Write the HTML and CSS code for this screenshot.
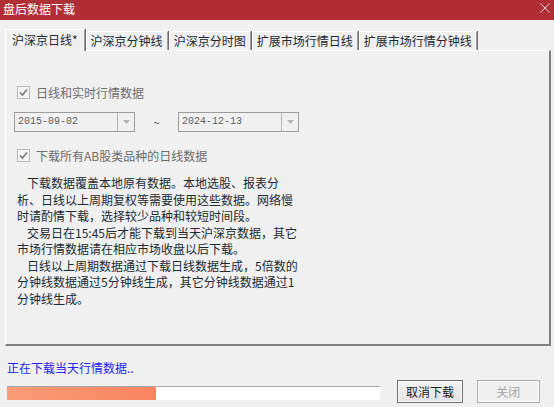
FILE: index.html
```html
<!DOCTYPE html>
<html lang="zh-CN">
<head>
    <meta charset="UTF-8">
    <title>盘后数据下载</title>
    <link rel="stylesheet" href="styles.css">
</head>
<body>
    <div class="window">
        <!-- Title bar -->
        <div class="titlebar">
            <span class="title">盘后数据下载</span>
            <svg class="close" width="10" height="10" viewBox="0 0 10 10">
                <path d="M0.5 0.5 L9.5 9.5 M9.5 0.5 L0.5 9.5" stroke="#f4d6d8" stroke-width="1" fill="none"/>
            </svg>
        </div>

        <!-- Tabs -->
        <div class="tabs">
            <div class="tab active">沪深京日线*</div>
            <div class="tab">沪深京分钟线</div>
            <div class="tab">沪深京分时图</div>
            <div class="tab">扩展市场行情日线</div>
            <div class="tab">扩展市场行情分钟线</div>
        </div>

        <div class="panel">
            <div class="check">
                <span class="box">
                    <svg width="9" height="9" viewBox="0 0 9 9"><path d="M1 4.5 L3.5 7 L8 1.5" stroke="#777" stroke-width="1.6" fill="none"/></svg>
                </span>
                日线和实时行情数据
            </div>

            <div class="dates">
                <div class="combo">
                    <span class="value">2015-09-02</span>
                    <span class="arrow"><svg width="7" height="4" viewBox="0 0 7 4"><path d="M0 0 H7 L3.5 4 Z" fill="#b4b4b4"/></svg></span>
                </div>
                <span class="tilde">~</span>
                <div class="combo">
                    <span class="value">2024-12-13</span>
                    <span class="arrow"><svg width="7" height="4" viewBox="0 0 7 4"><path d="M0 0 H7 L3.5 4 Z" fill="#b4b4b4"/></svg></span>
                </div>
            </div>

            <div class="check">
                <span class="box">
                    <svg width="9" height="9" viewBox="0 0 9 9"><path d="M1 4.5 L3.5 7 L8 1.5" stroke="#777" stroke-width="1.6" fill="none"/></svg>
                </span>
                下载所有AB股类品种的日线数据
            </div>

            <div class="notes">
                <div class="indent">下载数据覆盖本地原有数据。本地选股、报表分</div>
                <div>析、日线以上周期复权等需要使用这些数据。网络慢</div>
                <div>时请酌情下载，选择较少品种和较短时间段。</div>
                <div class="indent">交易日在15:45后才能下载到当天沪深京数据，其它</div>
                <div>市场行情数据请在相应市场收盘以后下载。</div>
                <div class="indent">日线以上周期数据通过下载日线数据生成，5倍数的</div>
                <div>分钟线数据通过5分钟线生成，其它分钟线数据通过1</div>
                <div>分钟线生成。</div>
            </div>
        </div>

        <div class="status">正在下载当天行情数据..</div>

        <div class="footer">
            <div class="progress"><div class="fill" style="width: 40%"></div></div>
            <button class="btn">取消下载</button>
            <button class="btn" disabled>关闭</button>
        </div>
    </div>
</body>
</html>
```

FILE: styles.css
```css
body {
    margin: 0;
    background: #f0f0f0;
    font-family: "Noto Sans CJK SC", "Liberation Sans", sans-serif;
    font-size: 12px;
    color: #1b2b33;
}
.window {
    width: 554px;
    height: 407px;
    overflow: hidden;
    display: flex;
    flex-direction: column;
}
.window > * {
    flex-shrink: 0;
}
.titlebar {
    height: 20px;
    background: #b22e35;
    display: flex;
    align-items: center;
    justify-content: space-between;
    padding: 0 4px 0 3px;
}
.title {
    color: #fff;
    font-size: 12px;
    line-height: 20px;
    margin-top: -2px;
}
.close {
    margin-top: -5px;
}
.tabs {
    display: flex;
    align-items: flex-end;
    margin-top: 8px;
    padding-left: 5px;
    height: 22px;
}
.tab {
    height: 18px;
    line-height: 18px;
    padding: 0 4px;
    border-left: 1px solid #fff;
    border-top: 1px solid #fff;
    border-right: 1px solid #a0a0a0;
    box-shadow: 1px 0 0 #696969;
    margin-right: 1px;
    white-space: nowrap;
}
.tab.active {
    height: 21px;
    line-height: 20px;
    padding: 0 6px 0 6px;
    position: relative;
    z-index: 1;
    margin-bottom: -1px;
    background: #f0f0f0;
}
.panel {
    box-sizing: border-box;
    margin: 0 3px 0 5px;
    height: 296px;
    border-top: 1px solid #fff;
    border-left: 1px solid #fff;
    border-right: 2px solid #808080;
    border-bottom: 2px solid #808080;
    padding: 33px 0 0 11px;
    display: flex;
    flex-direction: column;
}
.check {
    display: flex;
    align-items: center;
    gap: 6px;
    height: 16px;
    color: #6d6d6d;
}
.box {
    width: 11px;
    height: 11px;
    border: 1px solid #b8b8b8;
    background: #f4f4f4;
    display: flex;
    align-items: center;
    justify-content: center;
}
.dates {
    display: flex;
    align-items: center;
    margin: 12px 0 15px -3px;
}
.combo {
    width: 119px;
    height: 18px;
    border: 1px solid #9c9c9c;
    background: #f0f0f0;
    display: flex;
}
.value {
    flex-grow: 1;
    font-family: "Liberation Mono", monospace;
    font-size: 10px;
    line-height: 18px;
    color: #5e5e5e;
    padding-left: 3px;
}
.arrow {
    width: 16px;
    border-left: 1px solid #b4b4b4;
    display: flex;
    align-items: center;
    justify-content: center;
}
.tilde {
    width: 43px;
    text-align: center;
    color: #444;
    font-size: 11px;
}
.notes {
    margin-top: 12px;
    line-height: 16.5px;
}
.indent {
    padding-left: 10px;
}
.status {
    margin: 14px 0 0 7px;
    color: #2424e8;
    height: 16px;
    line-height: 16px;
}
.footer {
    display: flex;
    align-items: center;
    margin-top: 4px;
    padding-left: 7px;
    height: 23px;
}
.progress {
    width: 377px;
    height: 13px;
    border-top: 1px solid #a8a8a8;
    background: #fff;
    margin-right: 17px;
    margin-top: 2px;
}
.fill {
    height: 100%;
    background: linear-gradient(to right, #fa9c78, #f8845f);
}
.btn {
    height: 23px;
    width: 66px;
    margin-right: 14px;
    padding: 0;
    font-family: inherit;
    font-size: 12px;
    color: #1b1b1b;
    background: linear-gradient(#f2f2f2, #e3e3e3);
    border: 1px solid #707070;
    box-shadow: inset 0 0 0 1px #fbfbfb;
}
.btn:disabled {
    width: 64px;
    color: #a3a3a3;
    border-color: #adadad;
    background: #f0f0f0;
}
```
